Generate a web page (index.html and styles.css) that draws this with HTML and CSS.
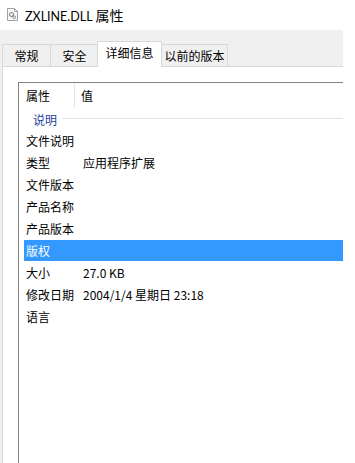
FILE: index.html
```html
<!DOCTYPE html>
<html lang="zh-CN">
<head>
    <meta charset="UTF-8">
    <title>ZXLINE.DLL 属性</title>
    <link rel="stylesheet" href="styles.css">
</head>
<body>
    <div class="titlebar">
        <svg class="file-icon" width="11" height="13" viewBox="0 0 11 13">
            <path d="M0.5 0.5 H7.5 L10.5 3.5 V12.5 H0.5 Z" fill="#fafafa" stroke="#a0a0a0"/>
            <path d="M7.5 0.5 V3.5 H10.5" fill="none" stroke="#a0a0a0"/>
            <circle cx="4.5" cy="6.5" r="2" fill="none" stroke="#8a8a8a" stroke-width="1.2"/>
            <circle cx="7.3" cy="9.3" r="1.4" fill="none" stroke="#8a8a8a" stroke-width="1"/>
        </svg>
        <span class="title">ZXLINE.DLL <span class="title-cjk">属性</span></span>
    </div>

    <div class="dialog">
        <div class="tabs">
            <div class="tab tab-general">常规</div>
            <div class="tab tab-security">安全</div>
            <div class="tab tab-details active">详细信息</div>
            <div class="tab tab-versions">以前的版本</div>
        </div>

        <div class="panel">
            <div class="listview">
                <div class="list-header">
                    <div class="col-name">属性</div>
                    <div class="col-value">值</div>
                </div>

                <div class="group">
                    <span>说明</span>
                    <div class="group-line"></div>
                </div>

                <div class="row"><div class="col-name">文件说明</div><div class="col-value"></div></div>
                <div class="row"><div class="col-name">类型</div><div class="col-value">应用程序扩展</div></div>
                <div class="row"><div class="col-name">文件版本</div><div class="col-value"></div></div>
                <div class="row"><div class="col-name">产品名称</div><div class="col-value"></div></div>
                <div class="row"><div class="col-name">产品版本</div><div class="col-value"></div></div>
                <div class="row selected"><div class="col-name">版权</div><div class="col-value"></div></div>
                <div class="row"><div class="col-name">大小</div><div class="col-value">27.0 KB</div></div>
                <div class="row"><div class="col-name">修改日期</div><div class="col-value">2004/1/4 星期日 23:18</div></div>
                <div class="row"><div class="col-name">语言</div><div class="col-value"></div></div>
            </div>
        </div>
    </div>
</body>
</html>
```

FILE: styles.css
```css
body {
    margin: 0;
    width: 355px;
    height: 463px;
    overflow: hidden;
    background-color: white;
    font-family: "Noto Sans CJK SC", "Noto Sans", sans-serif;
    font-size: 12px;
    color: #000;
}

.titlebar {
    height: 30px;
    display: flex;
    align-items: center;
    padding-left: 7px;
}

.file-icon {
    margin-right: 7px;
    margin-top: -1px;
}

.title {
    font-family: Lato, "Noto Sans CJK SC", sans-serif;
    font-size: 12.5px;
    color: #000;
}

.title-cjk {
    font-family: "Noto Sans CJK SC", sans-serif;
    font-size: 14px;
}

.dialog {
    width: 343px;
    height: 433px;
    background-color: #f0f0f0;
    display: flex;
    flex-direction: column;
}

.tabs {
    display: flex;
    align-items: flex-end;
    padding-left: 2px;
    margin-top: 11px;
    height: 25px;
    position: relative;
    z-index: 1;
}

.tab {
    height: 22px;
    line-height: 21px;
    box-sizing: border-box;
    border: 1px solid #d9d9d9;
    border-bottom: none;
    border-right: none;
    background-color: #f0f0f0;
    text-align: center;
    white-space: nowrap;
    color: #000;
}

.tab-general { width: 48px; }
.tab-security { width: 48px; }
.tab-versions { width: 67px; border-right: 1px solid #d9d9d9; }

.tab.active {
    height: 26px;
    line-height: 22px;
    width: 65px;
    margin-bottom: -1px;
    margin-left: -1px;
    margin-right: -1px;
    background-color: white;
    border-right: 1px solid #d9d9d9;
    position: relative;
    z-index: 1;
}

.panel {
    flex: 1;
    margin-left: 2px;
    background-color: white;
    border-left: 1px solid #d9d9d9;
    border-top: 1px solid #d9d9d9;
    padding: 15px 0 0 15px;
}

.listview {
    height: 100%;
    border-left: 1px solid #828282;
    border-top: 1px solid #828282;
}

.list-header {
    display: flex;
    height: 25px;
    align-items: center;
}

.list-header .col-name {
    width: 56px;
    height: 100%;
    line-height: 25px;
    padding-left: 7px;
    box-sizing: border-box;
    border-right: 1px solid #e5e5e5;
}

.list-header .col-value {
    padding-left: 6px;
}

.group {
    height: 22px;
    display: flex;
    align-items: center;
    padding-left: 14px;
    color: #1e3f9e;
}

.group-line {
    flex: 1;
    height: 1px;
    margin-left: 5px;
    margin-top: -2px;
    background-color: #e2e5ea;
}

.row {
    display: flex;
    height: 22px;
    line-height: 22px;
    margin-left: 5px;
}

.row .col-name {
    width: 59px;
    padding-left: 2px;
    box-sizing: border-box;
    white-space: nowrap;
}

.row .col-value {
    white-space: nowrap;
}

.row.selected {
    background-color: #3399ff;
    color: white;
    height: 21px;
    line-height: 21px;
    margin-bottom: 1px;
}
```
